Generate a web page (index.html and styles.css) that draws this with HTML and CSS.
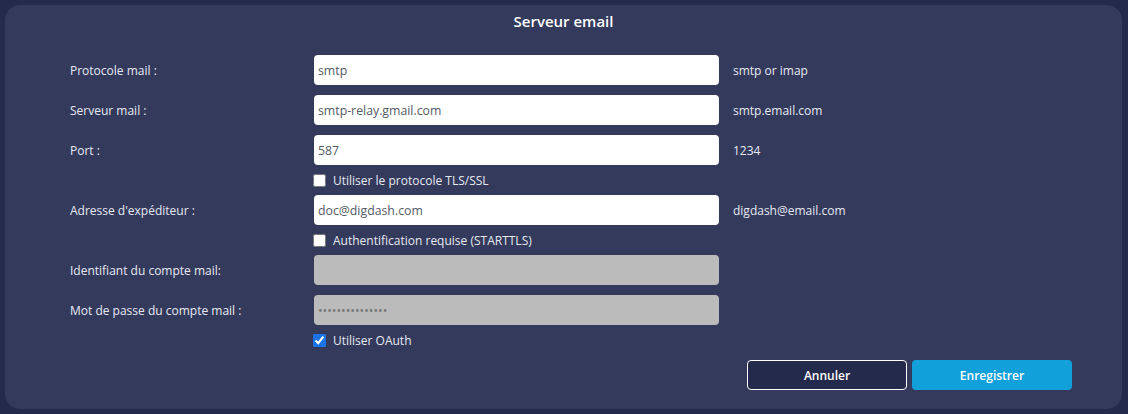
FILE: index.html
```html
<!DOCTYPE html>
<html lang="fr">
<head>
    <meta charset="UTF-8">
    <title>Serveur email</title>
    <link rel="stylesheet" href="styles.css">
</head>
<body>
    <div class="panel">
        <div class="panel-title">Serveur email</div>
        <div class="form">
            <div class="form-row">
                <label class="form-label">Protocole mail :</label>
                <input class="form-input" type="text" value="smtp">
                <span class="form-hint">smtp or imap</span>
            </div>
            <div class="form-row">
                <label class="form-label">Serveur mail :</label>
                <input class="form-input" type="text" value="smtp-relay.gmail.com">
                <span class="form-hint">smtp.email.com</span>
            </div>
            <div class="form-row">
                <label class="form-label">Port :</label>
                <input class="form-input" type="text" value="587">
                <span class="form-hint">1234</span>
            </div>
            <div class="check-row">
                <label class="check-label"><input type="checkbox"> Utiliser le protocole TLS/SSL</label>
            </div>
            <div class="form-row">
                <label class="form-label">Adresse d'expéditeur :</label>
                <input class="form-input" type="text" value="doc@digdash.com">
                <span class="form-hint">digdash@email.com</span>
            </div>
            <div class="check-row">
                <label class="check-label"><input type="checkbox"> Authentification requise (STARTTLS)</label>
            </div>
            <div class="form-row">
                <label class="form-label">Identifiant du compte mail:</label>
                <input class="form-input" type="text" value="" disabled>
            </div>
            <div class="form-row">
                <label class="form-label">Mot de passe du compte mail :</label>
                <input class="form-input" type="password" value="***************" disabled>
            </div>
            <div class="check-row">
                <label class="check-label"><input type="checkbox" checked> Utiliser OAuth</label>
            </div>
        </div>
        <div class="button-container">
            <button class="btn btn-cancel">Annuler</button>
            <button class="btn btn-save">Enregistrer</button>
        </div>
    </div>
</body>
</html>
```

FILE: styles.css
```css
* {
    box-sizing: border-box;
}

html, body {
    height: 100%;
    overflow: hidden;
}

body {
    margin: 0;
    padding: 5px 6px 5px 5px;
    background: #242a4b;
    font-family: "Open Sans", sans-serif;
    color: #e6e9f2;
}

.panel {
    background: #343a5c;
    border-radius: 15px;
    height: 404px;
}

.panel-title {
    text-align: center;
    font-size: 15px;
    font-weight: 600;
    color: #ffffff;
    padding-top: 5px;
    height: 45px;
    line-height: 22px;
}

.form {
    display: flex;
    flex-direction: column;
    padding-left: 65px;
}

.form-row {
    display: flex;
    align-items: center;
    height: 40px;
}

.form-label {
    width: 244px;
    font-size: 12px;
}

.form-input {
    width: 405px;
    height: 30px;
    border: none;
    border-radius: 4px;
    background: #ffffff;
    padding: 0 4px;
    font-family: "Open Sans", sans-serif;
    font-size: 12.3px;
    color: #555a66;
}

.form-input:disabled {
    background: #bbbbbb;
    color: #777777;
}

.form-hint {
    margin-left: 14px;
    font-size: 12px;
}

.check-row {
    height: 20px;
    display: flex;
    align-items: center;
    padding-left: 243px;
}

.check-label {
    display: inline-flex;
    align-items: center;
    gap: 7px;
    font-size: 12px;
}

.check-label input {
    margin: 0;
    width: 13px;
    height: 13px;
    accent-color: #1a73e8;
}

.button-container {
    display: flex;
    justify-content: flex-end;
    gap: 5px;
    margin-top: 10px;
    padding-right: 50px;
}

.btn {
    width: 160px;
    height: 30px;
    border-radius: 4px;
    font-family: "Open Sans", sans-serif;
    font-size: 12px;
    font-weight: 600;
    color: #ffffff;
    cursor: pointer;
}

.btn-cancel {
    background: #232a4c;
    border: 1px solid #ffffff;
}

.btn-save {
    background: #12a0db;
    border: none;
}
```
